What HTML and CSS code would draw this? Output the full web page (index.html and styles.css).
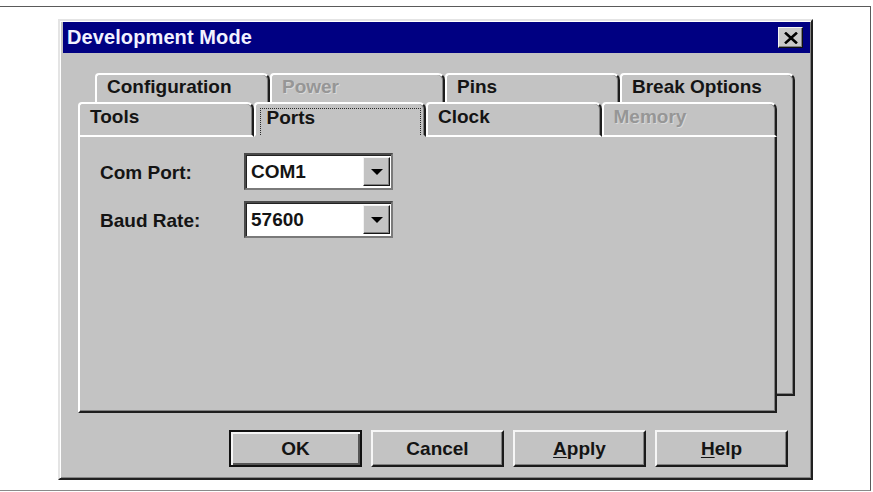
FILE: index.html
```html
<!DOCTYPE html>
<html lang="en">
<head>
<meta charset="utf-8">
<title>Development Mode</title>
<link rel="stylesheet" href="styles.css">
</head>
<body>
<div class="frame">
  <div class="dialog">
    <div class="titlebar">
      <span class="title">Development Mode</span>
      <button class="close" type="button" aria-label="Close">
        <svg width="14" height="12" viewBox="0 0 14 12">
          <path d="M2 1.5 L12 10.5 M12 1.5 L2 10.5" stroke="#000" stroke-width="2.6" stroke-linecap="square"/>
        </svg>
      </button>
    </div>

    <div class="tabctl">
      <div class="tabrow back-row">
        <div class="tab">Configuration</div>
        <div class="tab disabled">Power</div>
        <div class="tab">Pins</div>
        <div class="tab">Break Options</div>
      </div>
      <div class="back-page"></div>
      <div class="front">
        <div class="tabrow front-row">
          <div class="tab">Tools</div>
          <div class="tab selected"><span class="focus">Ports</span></div>
          <div class="tab">Clock</div>
          <div class="tab disabled">Memory</div>
        </div>
        <div class="panel">
          <div class="fields">
            <span class="label">Com Port:</span>
            <div class="combo"><span class="value">COM1</span><span class="drop"><i class="arrow"></i></span></div>
            <span class="label">Baud Rate:</span>
            <div class="combo"><span class="value">57600</span><span class="drop"><i class="arrow"></i></span></div>
          </div>
        </div>
      </div>
    </div>

    <div class="buttons">
      <button class="btn default" type="button">OK</button>
      <button class="btn" type="button">Cancel</button>
      <button class="btn" type="button"><u>A</u>pply</button>
      <button class="btn" type="button"><u>H</u>elp</button>
    </div>
  </div>
</div>
</body>
</html>
```

FILE: styles.css
```css
html, body {
  margin: 0;
  background: #fff;
}

body {
  font-family: "Liberation Sans", Arial, sans-serif;
  font-weight: bold;
  color: #141414;
}

/* figure box around the dialog */
.frame {
  box-sizing: border-box;
  width: 871px;
  height: 485px;
  margin-top: 6px;
  padding: 12px 0 0 58px;
  border-top: 1px solid #5a5a5a;
  border-right: 1px solid #5a5a5a;
  border-bottom: 1px solid #8a8a8a;
}

/* window */
.dialog {
  box-sizing: border-box;
  width: 755px;
  height: 461px;
  padding: 1px 1px 0 3px;
  background: #c3c3c3;
  border: 2px solid;
  border-color: #e4e4e4 #202020 #202020 #e4e4e4;
  box-shadow: inset 1px 1px 0 #fff, inset -1px -1px 0 #858585;
}

.titlebar {
  display: flex;
  align-items: center;
  height: 31px;
  padding-left: 4px;
  background: #000082;
}

.title {
  color: #f2f2ff;
  font-size: 20px;
  letter-spacing: 0.1px;
}

.close {
  display: flex;
  align-items: center;
  justify-content: center;
  box-sizing: border-box;
  width: 25px;
  height: 21px;
  margin: 0 7px 0 auto;
  padding: 0;
  background: #c8c8c8;
  border: 1px solid;
  border-color: #f4f4f4 #101010 #101010 #f4f4f4;
  box-shadow: inset -1px -1px 0 #808080;
}

/* tab control: back row + its page, front row + active page laid over it */
.tabctl {
  display: grid;
  grid-template-columns: 17px 682px 18px;
  grid-template-rows: 29px 311px;
  margin: 20px 0 0 15px;
}

.tabrow {
  display: flex;
}

.back-row {
  grid-area: 1 / 2 / 2 / 4;
}

.back-page {
  grid-area: 2 / 2 / 3 / 4;
  margin-bottom: 17px;
  border-right: 2px solid #1e1e1e;
  border-bottom: 2px solid #1e1e1e;
  box-shadow: inset -1px -1px 0 #808080;
}

.front {
  grid-area: 2 / 1 / 3 / 3;
  display: flex;
  flex-direction: column;
  background: #c3c3c3;
}

.tab {
  flex: 1;
  box-sizing: border-box;
  padding-left: 10px;
  font-size: 19px;
  line-height: 16px;
  white-space: nowrap;
  border-top: 2px solid #fff;
  border-left: 2px solid #fff;
  border-right: 2px solid #1e1e1e;
  border-radius: 4px 7px 0 0;
  box-shadow: inset -1px 0 0 #808080;
}

.back-row .tab {
  height: 29px;
  padding-top: 4px;
}

.front-row .tab {
  height: 35px;
  padding-top: 5px;
  border-bottom: 2px solid #fff;
}

.tab.disabled {
  color: #969696;
  text-shadow: 1px 1px 0 #d8d8d8;
}

.front-row .tab.selected {
  display: flex;
  padding: 4px 3px 0 4px;
  border-bottom-color: #c3c3c3;
}

.focus {
  flex: 1;
  padding: 1px 0 0 6px;
  border: 1px dotted #2a2a2a;
  border-bottom: 0;
}

.panel {
  flex: 1;
  border-left: 2px solid #fff;
  border-right: 2px solid #1e1e1e;
  border-bottom: 2px solid #1e1e1e;
  box-shadow: inset -1px -1px 0 #808080;
}

.fields {
  display: grid;
  grid-template-columns: 144px 149px;
  row-gap: 11px;
  align-items: center;
  padding: 16px 0 0 20px;
}

.label {
  font-size: 19px;
  line-height: 22px;
  padding-top: 2px;
}

.combo {
  display: flex;
  align-items: center;
  box-sizing: border-box;
  height: 37px;
  padding: 2px 1px 2px 5px;
  background: #fff;
  border: 2px solid;
  border-color: #4a4a4a #7a7a7a #7a7a7a #4a4a4a;
  box-shadow: inset 1px 1px 0 #222;
}

.value {
  flex: 1;
  font-size: 19px;
  line-height: 22px;
}

.drop {
  display: flex;
  align-items: center;
  justify-content: center;
  box-sizing: border-box;
  width: 27px;
  height: 29px;
  background: #c3c3c3;
  border: 1px solid;
  border-color: #f2f2f2 #161616 #161616 #f2f2f2;
  box-shadow: inset -1px -1px 0 #808080;
}

.arrow {
  width: 0;
  height: 0;
  border-left: 6px solid transparent;
  border-right: 6px solid transparent;
  border-top: 6px solid #000;
}

/* command buttons */
.buttons {
  display: flex;
  justify-content: flex-end;
  gap: 9px;
  margin-top: 17px;
  padding-right: 22px;
}

.btn {
  box-sizing: border-box;
  width: 133px;
  height: 37px;
  padding: 0;
  font-family: "Liberation Sans", Arial, sans-serif;
  font-weight: bold;
  font-size: 19px;
  color: #141414;
  background: #c3c3c3;
  border: 2px solid;
  border-color: #f6f6f6 #1a1a1a #1a1a1a #f6f6f6;
  box-shadow: inset -1px -1px 0 #808080;
}

.btn.default {
  border: 2px solid #111;
  box-shadow: inset 2px 2px 0 #f6f6f6, inset -2px -2px 0 #555;
}

.btn u {
  text-underline-offset: 2px;
}
```
